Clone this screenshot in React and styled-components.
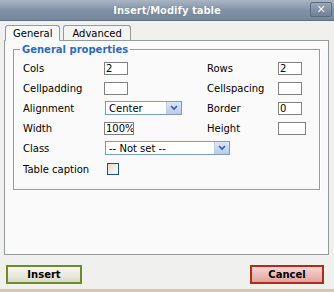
import React from "react";
import styled, { createGlobalStyle } from "styled-components";

const Global = createGlobalStyle`
  html, body { margin: 0; padding: 0; }
  body { width: 334px; height: 292px; overflow: hidden; background: #f0f0ee; font-family: "DejaVu Sans", Verdana, sans-serif; }
`;

const Win = styled.div`
  width: 334px;
  height: 292px;
  display: flex;
  flex-direction: column;
  background: #f0f0ee;
  box-sizing: border-box;
  border-bottom: 3px solid #d8c8b0;
`;

const TitleBar = styled.div`
  height: 20px;
  flex: none;
  position: relative;
  display: flex;
  align-items: center;
  justify-content: center;
  background: linear-gradient(#a9b5c3, #8090a4 55%, #75879c);
  border-bottom: 1px solid #5f6f82;
  color: #fff;
  font-weight: bold;
  font-size: 10px;
  text-shadow: 0 0 1px #55657a;
`;

const Close = styled.div`
  position: absolute;
  right: 2px;
  top: 2px;
  width: 20px;
  height: 13px;
  border: 1px solid #5d6c80;
  border-radius: 2px;
  background: linear-gradient(#98a7b8, #6f8197);
  display: flex;
  align-items: center;
  justify-content: center;
  color: #fff;
  font-size: 11px;
  font-weight: bold;
  line-height: 1;
`;

const Body = styled.div`
  flex: 1;
  display: flex;
  flex-direction: column;
  padding: 4px 5px 0 4px;
`;

const Tabs = styled.div`
  display: flex;
  gap: 3px;
  padding-left: 1px;
  height: 15px;
  align-items: flex-end;
  position: relative;
  z-index: 1;
`;

const Tab = styled.div`
  height: ${p => (p.$active ? "16px" : "15px")};
  padding: 0 ${p => (p.$active ? "7px" : "8px")};
  box-sizing: border-box;
  border: 1px solid #919b9c;
  border-bottom: ${p => (p.$active ? "1px solid #fafafa" : "none")};
  border-radius: 3px 3px 0 0;
  background: ${p => (p.$active ? "#fafafa" : "#f4f4f2")};
  font-size: 10px;
  color: #000;
  display: flex;
  align-items: center;
  margin-bottom: ${p => (p.$active ? "-1px" : "0")};
`;

const Panel = styled.div`
  height: 215px;
  box-sizing: border-box;
  border: 1px solid #919b9c;
  background: #fafafa;
  padding: 3px 8px 0 8px;
`;

const Fieldset = styled.fieldset`
  margin: 0;
  border: 1px solid #9a9a9a;
  box-shadow: inset 1px 1px 0 #fff, 1px 1px 0 #fff;
  padding: 3px 0 6px 9px;
  height: 146px;
  box-sizing: border-box;
`;

const Legend = styled.legend`
  color: #2b6bbf;
  font-weight: bold;
  font-size: 10px;
  padding: 0 2px;
  margin-left: -3px;
`;

const Grid = styled.div`
  display: grid;
  grid-template-columns: 81px 103px 71px auto;
  grid-auto-rows: 20px;
  align-items: center;
  font-size: 10px;
  color: #000;
`;

const Label = styled.div`
  white-space: nowrap;
`;

const Input = styled.div`
  width: ${p => p.$w || 24}px;
  height: 13px;
  box-sizing: border-box;
  border: 1px solid #808080;
  background: #fff;
  font-size: 10px;
  line-height: 11px;
  padding-left: 1px;
  overflow: hidden;
  white-space: nowrap;
`;

const Select = styled.div`
  width: ${p => p.$w}px;
  height: 14px;
  box-sizing: border-box;
  border: 1px solid #7f9db9;
  background: #fff;
  display: flex;
  align-items: center;
  font-size: 10px;
  padding-left: 3px;
  justify-content: space-between;
  margin-left: 1px;
`;

const Arrow = styled.div`
  width: 14px;
  height: 12px;
  background: linear-gradient(#dbe6f8, #b8cbef);
  border-left: 1px solid #c0cce0;
  display: flex;
  align-items: center;
  justify-content: center;
`;

const SpanCell = styled.div`
  grid-column: 2 / 4;
`;

const CaptionRow = styled.div`
  grid-column: 1 / -1;
  display: grid;
  grid-template-columns: 84px auto;
  align-items: center;
  height: 22px;
  margin-top: 2px;
`;

const Check = styled.div`
  width: 12px;
  height: 12px;
  box-sizing: border-box;
  border: 1px solid #1c5180;
  background: linear-gradient(135deg, #dcdcd6, #fff);
`;

const Footer = styled.div`
  display: flex;
  justify-content: space-between;
  padding: 10px 5px 0 2px;
`;

const Button = styled.div`
  width: ${p => p.$w}px;
  height: 19px;
  box-sizing: border-box;
  border: 2px solid ${p => (p.$kind === "ok" ? "#6e8a2c" : "#b22a1c")};
  background: ${p =>
    p.$kind === "ok"
      ? "linear-gradient(#f6f6ee, #e8e8dc 60%, #d8dccb)"
      : "linear-gradient(#f4d6d2, #eab8b2 60%, #e0a39c)"};
  display: flex;
  align-items: center;
  justify-content: center;
  font-size: 10px;
  font-weight: bold;
  color: #000;
`;

const ArrowIcon = () => (
  <svg width="8" height="6" viewBox="0 0 8 6">
    <path d="M1 1 L4 4 L7 1" stroke="#3a5a9a" strokeWidth="1.6" fill="none" />
  </svg>
);

export default function App() {
  return (
    <Win>
      <Global />
      <TitleBar>
        Insert/Modify table
        <Close>✕</Close>
      </TitleBar>
      <Body>
        <Tabs>
          <Tab $active>General</Tab>
          <Tab>Advanced</Tab>
        </Tabs>
        <Panel>
          <Fieldset>
            <Legend>General properties</Legend>
            <Grid>
              <Label>Cols</Label>
              <Input>2</Input>
              <Label>Rows</Label>
              <Input>2</Input>

              <Label>Cellpadding</Label>
              <Input />
              <Label>Cellspacing</Label>
              <Input />

              <Label>Alignment</Label>
              <Select $w={77}>
                Center
                <Arrow><ArrowIcon /></Arrow>
              </Select>
              <Label>Border</Label>
              <Input>0</Input>

              <Label>Width</Label>
              <Input $w={30}>100%</Input>
              <Label>Height</Label>
              <Input $w={28} />

              <Label>Class</Label>
              <SpanCell>
                <Select $w={125}>
                  -- Not set --
                  <Arrow><ArrowIcon /></Arrow>
                </Select>
              </SpanCell>
              <div />

              <CaptionRow>
                <Label>Table caption</Label>
                <Check />
              </CaptionRow>
            </Grid>
          </Fieldset>
        </Panel>
        <Footer>
          <Button $kind="ok" $w={76}>Insert</Button>
          <Button $kind="cancel" $w={74}>Cancel</Button>
        </Footer>
      </Body>
    </Win>
  );
}
